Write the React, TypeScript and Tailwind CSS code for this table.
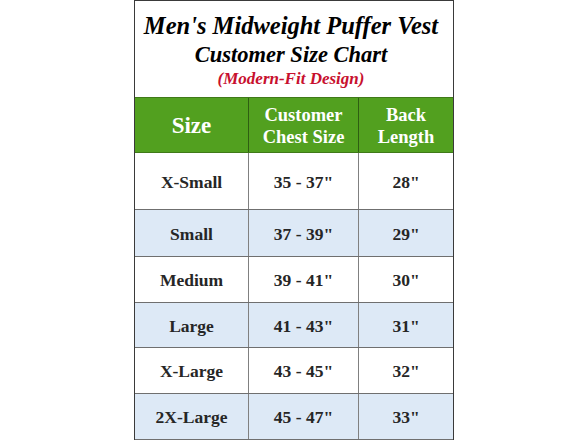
const rows = [
  { size: 'X-Small', chest: '35 - 37"', back: '28"', h: 'h-[56px]', shade: false },
  { size: 'Small', chest: '37 - 39"', back: '29"', h: 'h-[47px]', shade: true },
  { size: 'Medium', chest: '39 - 41"', back: '30"', h: 'h-[46px]', shade: false },
  { size: 'Large', chest: '41 - 43"', back: '31"', h: 'h-[45px]', shade: true },
  { size: 'X-Large', chest: '43 - 45"', back: '32"', h: 'h-[46px]', shade: false },
  { size: '2X-Large', chest: '45 - 47"', back: '33"', h: 'h-[47px]', shade: true },
]

export default function App() {
  return (
    <div className="w-[588px] h-[441px] bg-white overflow-hidden font-['Liberation_Serif',serif]">
      <div className="mx-auto w-[320px] border-x border-[#3a3a3a]">
        {/* Title */}
        <div className="h-[97px] border-t border-[#3a3a3a] flex flex-col items-center pt-[10px] pr-[6px]">
          <div className="text-[24.5px] leading-[30px] font-bold italic text-black">Men's Midweight Puffer Vest</div>
          <div className="text-[22.5px] leading-[28px] font-bold italic text-black">Customer Size Chart</div>
          <div className="text-[17px] leading-[20px] font-bold italic text-[#c8102e]">(Modern-Fit Design)</div>
        </div>

        {/* Header */}
        <div className="h-[56px] grid grid-cols-[114px_110px_1fr] bg-[#52a01f] border-y border-[#3f7a18] text-white font-bold">
          <div className="flex items-center justify-center border-r border-[#2f5e12] text-[23px] pt-[2px]">Size</div>
          <div className="flex flex-col items-center justify-center border-r border-[#2f5e12] text-[18.5px] leading-[22px] pt-[2px]">
            <span>Customer</span>
            <span>Chest Size</span>
          </div>
          <div className="flex flex-col items-center justify-center text-[18.5px] leading-[22px] pt-[2px]">
            <span>Back</span>
            <span>Length</span>
          </div>
        </div>

        {/* Body */}
        {rows.map((r, i) => (
          <div
            key={r.size}
            className={`${r.h} grid grid-cols-[114px_110px_1fr] text-[17.5px] font-bold text-[#262626] ${
              i > 0 ? 'border-t border-[#6f6f6f]' : ''
            } ${i === rows.length - 1 ? 'border-b border-[#6f6f6f]' : ''} ${r.shade ? 'bg-[#dde9f6]' : 'bg-white'}`}
          >
            <div className="flex items-center justify-center pt-[2px] border-r border-[#808080]">{r.size}</div>
            <div className="flex items-center justify-center pt-[2px] border-r border-[#808080]">{r.chest}</div>
            <div className="flex items-center justify-center pt-[2px]">{r.back}</div>
          </div>
        ))}
      </div>
    </div>
  )
}
